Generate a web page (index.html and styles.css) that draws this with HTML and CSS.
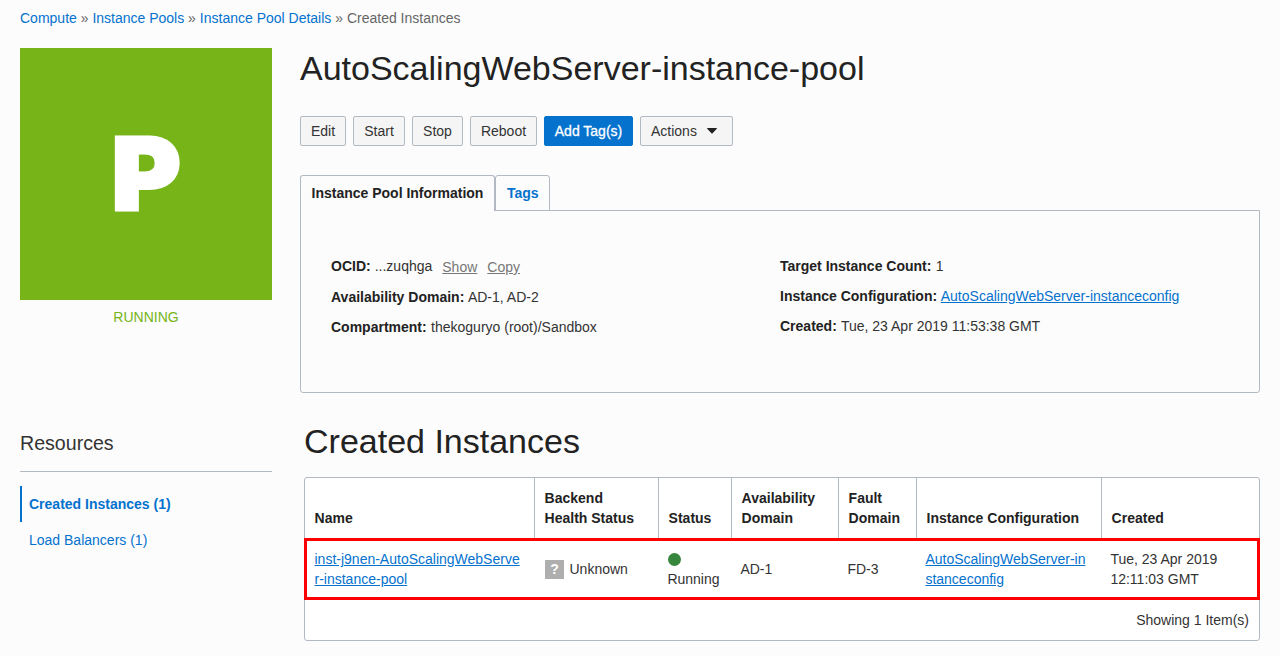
FILE: index.html
```html
<!DOCTYPE html>
<html lang="en">
<head>
<meta charset="utf-8">
<title>Instance Pool Details</title>
<link rel="stylesheet" href="styles.css">
</head>
<body>
<nav class="breadcrumb"><a>Compute</a> » <a>Instance Pools</a> » <a>Instance Pool Details</a> » <span>Created Instances</span></nav>
<div class="layout">
  <aside class="sidebar">
    <div class="tile"><span class="tile-letter">P</span></div>
    <div class="state"><span>RUNNING</span></div>
    <h2 class="resources-title"><span>Resources</span></h2>
    <ul class="resources">
      <li class="resource active"><a>Created Instances (1)</a></li>
      <li class="resource"><a>Load Balancers (1)</a></li>
    </ul>
  </aside>
  <main class="content">
    <h1 class="title"><span>AutoScalingWebServer-instance-pool</span></h1>
    <div class="actions">
      <button class="btn w46">Edit</button>
      <button class="btn w52">Start</button>
      <button class="btn w51">Stop</button>
      <button class="btn w67">Reboot</button>
      <button class="btn primary">Add Tag(s)</button>
      <button class="btn menu">Actions <svg width="10" height="6" viewBox="0 0 10 6"><path d="M0 0.5Q0 0 .6 0H9.4Q10 0 10 .5L5.6 5.3Q5 5.9 4.4 5.3Z" fill="#222"/></svg></button>
    </div>
    <div class="tabs">
      <div class="tab current"><span>Instance Pool Information</span></div>
      <div class="tab other"><span>Tags</span></div>
    </div>
    <section class="panel">
      <div class="info left">
        <p class="field ocid"><b>OCID:</b> ...zuqhga <a class="minor show">Show</a><a class="minor copy">Copy</a></p>
        <p class="field"><b>Availability Domain:</b> AD-1, AD-2</p>
        <p class="field"><b>Compartment:</b> thekoguryo (root)/Sandbox</p>
      </div>
      <div class="info right">
        <p class="field"><b>Target Instance Count:</b> 1</p>
        <p class="field"><b>Instance Configuration:</b> <a class="link">AutoScalingWebServer-instanceconfig</a></p>
        <p class="field"><b>Created:</b> Tue, 23 Apr 2019 11:53:38 GMT</p>
      </div>
    </section>
    <h1 class="title section"><span>Created Instances</span></h1>
    <div class="table">
      <div class="row head">
        <div class="cell">Name</div>
        <div class="cell">Backend<br>Health Status</div>
        <div class="cell">Status</div>
        <div class="cell">Availability<br>Domain</div>
        <div class="cell">Fault<br>Domain</div>
        <div class="cell">Instance Configuration</div>
        <div class="cell">Created</div>
      </div>
      <div class="row item">
        <div class="cell"><a class="link">inst-j9nen-AutoScalingWebServe<br>r-instance-pool</a></div>
        <div class="cell health"><span class="unknown">?</span>Unknown</div>
        <div class="cell status"><i class="dot"></i>Running</div>
        <div class="cell">AD-1</div>
        <div class="cell">FD-3</div>
        <div class="cell"><a class="link">AutoScalingWebServer-in<br>stanceconfig</a></div>
        <div class="cell">Tue, 23 Apr 2019<br>12:11:03 GMT</div>
      </div>
      <div class="foot">Showing 1 Item(s)</div>
    </div>
  </main>
</div>
</body>
</html>
```
FILE: styles.css
```css
* { box-sizing: border-box; }
body {
  margin: 0;
  height: 656px;
  overflow: hidden;
  background: #fcfcfc;
  color: #333;
  font: 14px/20px "Liberation Sans", Arial, sans-serif;
}
h1, h2, p, ul { margin: 0; padding: 0; font-weight: 400; }
b { color: #222; margin-right: .5px; }
.breadcrumb { padding: 8px 20px 20px; color: #666; white-space: nowrap; }
.breadcrumb a, .resource a { color: #0572ce; }
.layout { display: grid; grid-template-columns: 252px 960px; column-gap: 28px; padding-left: 20px; }
.tile { height: 252px; padding: 0 0 3px 1px; background: #76b417; display: flex; align-items: center; justify-content: center; }
.tile-letter { color: #fff; font: 900 101px/106px Inter, sans-serif; -webkit-text-stroke: 3px #fff; transform: scaleX(1.045); }
.state { padding-top: 7px; color: #76b417; text-align: center; }
.resources-title { margin-top: 104px; padding-bottom: 16px; border-bottom: 1px solid #b3b9c3; font-size: 19.6px; line-height: 24px; }
.resources { list-style: none; padding-top: 14px; }
.resource { height: 36px; padding-left: 7px; border-left: 2px solid transparent; line-height: 36px; }
.resource.active { border-color: #0572ce; font-weight: 700; }
.title { color: #222; font-size: 34px; line-height: 40px; white-space: nowrap; }
.actions { display: flex; gap: 7px; margin-top: 28px; }
.btn {
  height: 30px;
  padding: 0;
  border: 1px solid #b3b9c3;
  border-radius: 2px;
  background: #f5f5f5;
  color: #333;
  font: 14px/20px "Liberation Sans", Arial, sans-serif;
}
.w46 { width: 46px; }
.w52 { width: 52px; }
.w51 { width: 51px; }
.w67 { width: 67px; }
.primary { width: 89px; background: #0572ce; border-color: #0572ce; color: #fff; -webkit-text-stroke: .3px #fff; }
.menu { width: 93px; display: flex; align-items: center; padding-left: 10px; gap: 10px; }
.tabs { display: flex; margin-top: 29px; height: 36px; }
.tab { border: 1px solid #b3b9c3; border-radius: 3px 3px 0 0; font-weight: 700; line-height: 34px; }
.tab.current { z-index: 1; width: 195px; padding-left: 10.5px; border-bottom: 0; background: #fcfcfc; color: #222; }
.tab.other { width: 55px; padding-left: 11px; color: #0572ce; }
.panel { display: flex; height: 183px; margin-top: -1px; border: 1px solid #b3b9c3; border-radius: 0 0 3px 3px; }
.info { padding-top: 46px; display: flex; flex-direction: column; gap: 10px; }
.info.left { width: 449px; padding-left: 30px; }
.info.right { padding: 45px 0 0 30px; }
.field { height: 20px; white-space: nowrap; }
.ocid { display: flex; align-items: flex-start; gap: 4px; margin-top: -1px; height: 21px; }
.ocid b { margin-right: 0; }
.minor { padding-top: 1px; color: #777; text-decoration: underline; }
.show { margin-left: 6px; }
.copy { margin-left: 6px; }
.link { color: #0572ce; text-decoration: underline; }
.section { margin: 28px 0 0 4px; }
.table { margin: 16px 0 0 4px; height: 164px; border: 1px solid #b3b9c3; border-radius: 3px; background: #fff; }
.row { display: grid; white-space: nowrap; }
.head { grid-template-columns: 230px 124px 73px 107px 78px 185px 157px; height: 60px; color: #222; font-weight: 700; }
.head .cell { display: flex; align-items: flex-end; padding: 0 0 10px 9.6px; border-right: 1px solid #b3b9c3; }
.head .cell:last-child { border-right: 0; }
.item { grid-template-columns: 228px 124px 73px 107px 78px 185px 155px; align-items: center; height: 62px; margin: 0 -1px; border: 3px solid #f00; }
.item .cell { padding-left: 8.4px; }
.item .cell:first-child { padding-left: 7.5px; }
.item .health { display: flex; align-items: center; gap: 5.5px; padding-left: 10px; }
.unknown { width: 19px; height: 19px; background: #aeaeae; color: #fff; font-weight: 700; line-height: 19px; text-align: center; }
.dot { display: block; width: 13px; height: 13px; margin: 4px 0 3px .8px; border-radius: 50%; background: #36873b; }
.foot { padding: 10px 10px 0 0; text-align: right; }
```
